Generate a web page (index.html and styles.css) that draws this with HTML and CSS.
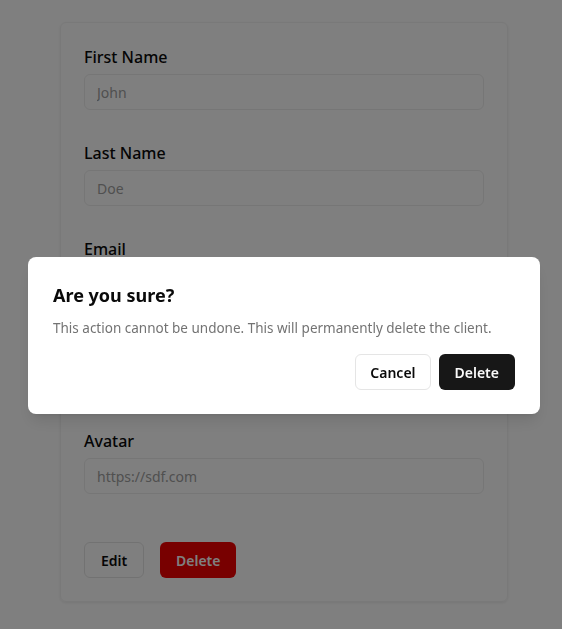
FILE: index.html
```html
<!DOCTYPE html>
<html lang="en">
<head>
<meta charset="utf-8">
<title>Client</title>
<link rel="stylesheet" href="styles.css">
</head>
<body>
<main class="page">
  <form class="card">
    <div class="field">
      <label class="label">First Name</label>
      <input class="input" value="John" disabled>
    </div>
    <div class="field">
      <label class="label">Last Name</label>
      <input class="input" value="Doe" disabled>
    </div>
    <div class="field">
      <label class="label">Email</label>
      <input class="input" value="john@doe.com" disabled>
    </div>
    <div class="field">
      <label class="label">Phone</label>
      <input class="input" value="123456789" disabled>
    </div>
    <div class="field">
      <label class="label">Avatar</label>
      <input class="input" value="https://sdf.com" disabled>
    </div>
    <div class="actions">
      <button type="button" class="btn btn-outline">Edit</button>
      <button type="button" class="btn btn-red">Delete</button>
    </div>
  </form>
</main>
<div class="overlay"></div>
<div class="dialog" role="alertdialog">
  <h2 class="dialog-title">Are you sure?</h2>
  <p class="dialog-desc">This action cannot be undone. This will permanently delete the client.</p>
  <div class="dialog-footer">
    <button type="button" class="btn btn-outline btn-cancel">Cancel</button>
    <button type="button" class="btn btn-dark">Delete</button>
  </div>
</div>
</body>
</html>
```

FILE: styles.css
```css
* { box-sizing: border-box; }
html, body { margin: 0; padding: 0; background: #fff; }
body {
  font-family: "Noto Sans", "Open Sans", sans-serif;
  color: #0a0a0a;
  height: 629px;
  overflow: hidden;
}
.page {
  padding: 22px 0 0 60px;
}
.card {
  width: 448px;
  border: 1px solid #f2f2f2;
  border-radius: 6px;
  box-shadow: 0 1px 3px rgba(0,0,0,0.08);
  padding: 24px 23px 23px;
  display: flex;
  flex-direction: column;
}
.field {
  display: flex;
  flex-direction: column;
  gap: 7px;
  margin-bottom: 33px;
}
.label {
  font-size: 16px;
  font-weight: 500;
  line-height: 20px;
}
.input {
  height: 36px;
  width: 100%;
  border: 1px solid #ededed;
  border-radius: 6px;
  padding: 0 12px;
  font: inherit;
  font-size: 14px;
  color: #a0a0a0;
  background: #fff;
  -webkit-text-fill-color: #a0a0a0;
  opacity: 1;
}
.actions {
  display: flex;
  gap: 16px;
  margin-top: 15px;
}
.btn {
  height: 36px;
  border-radius: 6px;
  font-family: inherit;
  font-size: 14px;
  font-weight: 600;
  padding: 0 16px;
  cursor: pointer;
}
.btn-cancel {
  padding: 0 14px;
}
.btn-outline {
  background: #fff;
  border: 1px solid #e5e5e5;
  color: #0a0a0a;
}
.btn-red {
  background: #f00000;
  border: none;
  color: #fff;
  width: 76px;
  padding: 0;
}
.btn-dark {
  background: #171717;
  border: none;
  color: #fafafa;
}
.overlay {
  position: fixed;
  inset: 0;
  background: rgba(0,0,0,0.5);
}
.dialog {
  position: fixed;
  left: 28px;
  top: 257px;
  width: 512px;
  background: #fff;
  border-radius: 8px;
  padding: 24px 25px 24px 25px;
  box-shadow: 0 10px 15px -3px rgba(0,0,0,0.1), 0 4px 6px -4px rgba(0,0,0,0.1);
}
.dialog-title {
  margin: 0;
  font-size: 18px;
  font-weight: 700;
  line-height: 28px;
}
.dialog-desc {
  margin: 9px 0 0;
  font-size: 13.5px;
  line-height: 20px;
  color: #737373;
}
.dialog-footer {
  display: flex;
  justify-content: flex-end;
  gap: 8px;
  margin-top: 16px;
}
```
